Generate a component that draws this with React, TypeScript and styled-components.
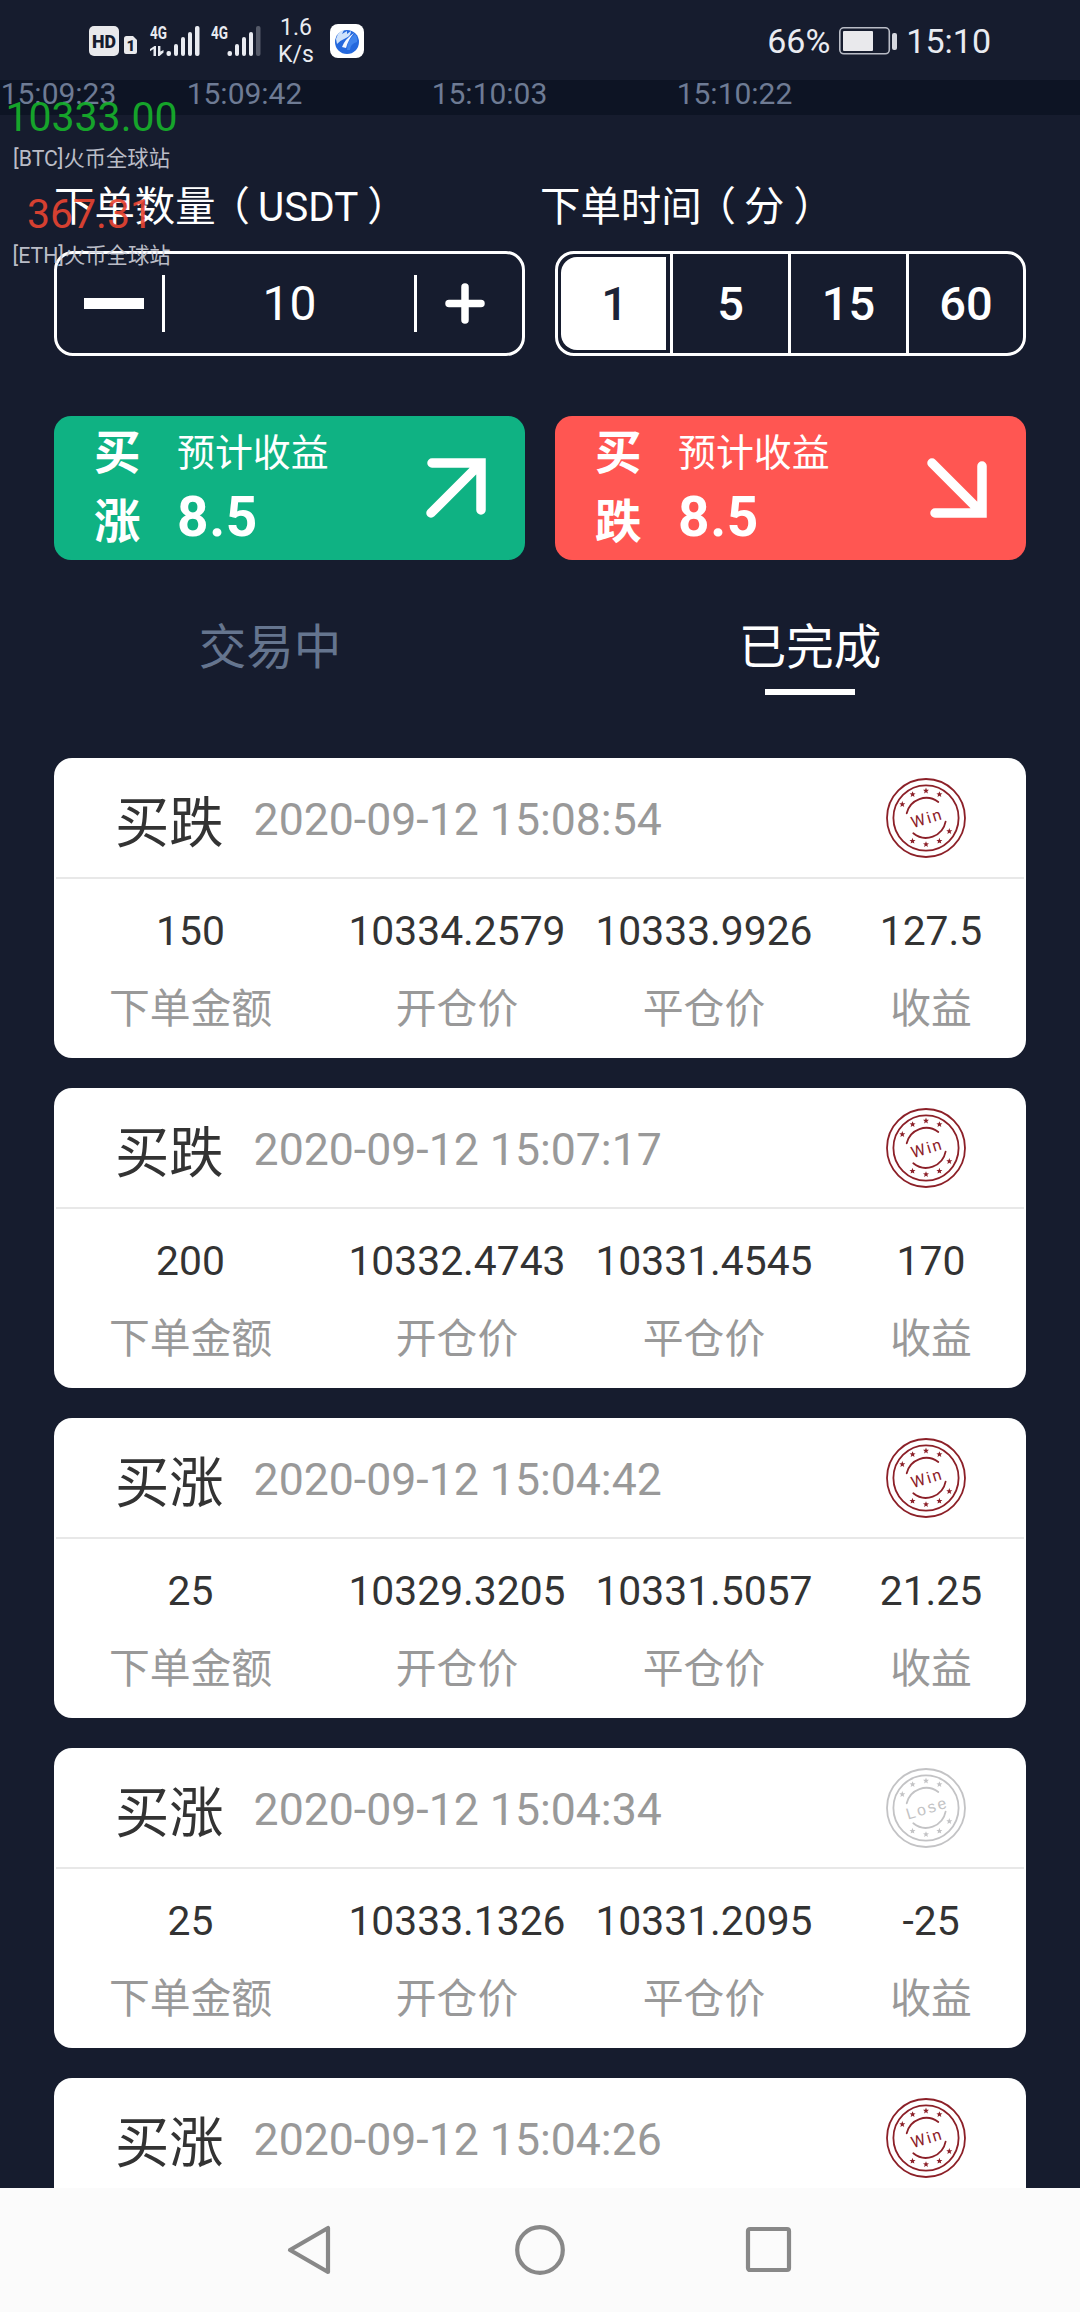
/**
 * Order Screen Component
 *
 * Short-term BTC options screen: order amount and duration pickers,
 * buy up / buy down actions and the list of finished orders.
 */
import React, { useState } from 'react';
import styled, { createGlobalStyle } from 'styled-components';

const GlobalStyle = createGlobalStyle`
  * {
    box-sizing: border-box;
  }

  body {
    margin: 0;
    background: #161c2e;
    font-family: Roboto, 'Noto Sans CJK SC', sans-serif;
  }
`;

const Screen = styled.div`
  position: relative;
  display: flex;
  flex-direction: column;
  width: 1080px;
  height: 2312px;
  overflow: hidden;
  background: #161c2e;
  color: #fff;
`;

// Status bar
const StatusBar = styled.div`
  display: flex;
  justify-content: space-between;
  align-items: center;
  flex: none;
  height: 80px;
  padding: 2px 89px 0;
  color: #e9ebf1;
`;

const StatusGroup = styled.div`
  display: flex;
  align-items: center;
`;

const StatusText = styled.span`
  font-size: 34px;
  line-height: 40px;
`;

const NetSpeed = styled.div`
  width: 36px;
  margin: 0 16px 0 17px;
  font-size: 23px;
  line-height: 27px;
  text-align: center;
`;

const AppBadge = styled.div`
  display: flex;
  align-items: center;
  justify-content: center;
  width: 34px;
  height: 34px;
  border-radius: 8px;
  background: #fff;
`;

const SignalIcon = styled.svg`
  overflow: visible;
`;

const BatteryIcon = styled.svg`
  margin: 0 9px 0 9px;
`;

// Time axis of the chart, scrolled under the status bar
const TimeAxis = styled.div`
  display: flex;
  flex: none;
  height: 35px;
  background: #0d1424;
  color: #6e7b94;
  font-size: 30px;
  line-height: 28px;
`;

const AxisLabel = styled.span<{ $width: number }>`
  width: ${props => props.$width}px;
  text-align: center;

  &:first-child {
    margin-right: 5px;
  }
`;

// Floating price window
const Ticker = styled.div`
  position: absolute;
  top: 93px;
  left: 0;
  width: 183px;
  text-align: center;
  opacity: 0.9;
`;

const TickerPrice = styled.div<{ $up?: boolean }>`
  color: ${props => (props.$up ? '#16b32b' : '#ea4532')};
  font-size: 41px;
  line-height: 48px;
  padding-right: ${props => (props.$up ? 0 : 3)}px;
`;

const TickerName = styled.div`
  margin: 4px 0 17px;
  color: #ccced8;
  font-size: 21.3px;
  line-height: 28px;
`;

// Order form
const FormGrid = styled.div`
  display: grid;
  grid-template-columns: 471px 471px;
  column-gap: 30px;
  padding: 0 54px;
`;

const FormLabels = styled.div`
  display: grid;
  grid-template-columns: 486px 1fr;
  padding: 69px 54px 19px;
  font-size: 40.4px;
  line-height: 48px;
`;

const OpenParen = styled.span`
  margin: 0 8px 0 -6px;
`;

const CloseParen = styled.span`
  margin-left: 9px;
`;

const Stepper = styled.div`
  display: flex;
  align-items: center;
  height: 105px;
  border: 3px solid #fff;
  border-radius: 19px;
`;

const StepButton = styled.button`
  display: flex;
  align-items: center;
  justify-content: center;
  width: 108px;
  height: 57px;
  padding: 0;
  border: 0;
  background: none;

  &:first-child {
    padding-left: 8px;
    border-right: 3px solid #fff;
  }

  &:last-child {
    padding-right: 10px;
    border-left: 3px solid #fff;
  }
`;

const Amount = styled.div`
  flex: 1;
  font-size: 48px;
  line-height: 60px;
  text-align: center;
`;

const Durations = styled.div`
  display: grid;
  grid-template-columns: 112px 118px 118px 1fr;
  height: 105px;
  border: 3px solid #fff;
  border-radius: 19px;
`;

const Duration = styled.button<{ $active: boolean }>`
  padding: ${props => (props.$active ? '0 0 0 2px' : '0')};
  margin: ${props => (props.$active ? '3px 4px 3px 3px' : '0')};
  border: 0;
  border-left: ${props => (props.$active ? 0 : '3px solid #fff')};
  border-radius: ${props => (props.$active ? '16px 0 0 16px' : '0')};
  background: ${props => (props.$active ? '#fff' : 'none')};
  color: ${props => (props.$active ? '#1c2438' : '#fff')};
  font-family: inherit;
  font-size: 47px;
  font-weight: 500;
`;

const ActionButton = styled.button<{ $color: string }>`
  display: flex;
  height: 144px;
  margin-top: 60px;
  padding: 0 37px 0 40px;
  border: 0;
  border-radius: 17px;
  background: ${props => props.$color};
  color: #fff;
  font-family: inherit;
  text-align: left;
`;

const ActionName = styled.div`
  width: 47px;
  padding-top: 3px;
  font-size: 46.5px;
  font-weight: 700;
  line-height: 69px;
`;

const ActionProfit = styled.div`
  flex: 1;
  padding: 13px 0 0 36px;
  font-size: 37.9px;
  line-height: 48px;

  strong {
    display: block;
    margin-top: 10px;
    font-size: 55px;
    letter-spacing: 0.6px;
    line-height: 60px;
  }
`;

const ArrowIcon = styled.svg`
  margin-top: 40px;
`;

// Tabs
const Tabs = styled.div`
  display: flex;
  margin-bottom: 63px;
  padding-top: 58px;
`;

const Tab = styled.div<{ $active: boolean }>`
  display: flex;
  flex: 1;
  flex-direction: column;
  align-items: center;
  color: ${props => (props.$active ? '#fff' : '#65758f')};
  font-size: 47.5px;
  line-height: 60px;

  &::after {
    content: '';
    width: 90px;
    height: 6px;
    margin-top: 11px;
    background: ${props => (props.$active ? '#fff' : 'transparent')};
  }
`;

// Order list
const OrderList = styled.div`
  display: flex;
  flex: 1;
  flex-direction: column;
  gap: 30px;
  min-height: 0;
  padding: 0 54px;
  overflow: hidden;
`;

const Card = styled.div`
  flex: none;
  height: 300px;
  border-radius: 18px;
  background: #fff;
  color: #333;
  overflow: hidden;
`;

const CardHeader = styled.div`
  display: flex;
  align-items: center;
  height: 121px;
  margin: 0 2px;
  padding: 1px 58px 0 59px;
  border-bottom: 2px solid #e8e8e8;
`;

const Direction = styled.div`
  padding-top: 11px;
  font-size: 54.3px;
  line-height: 64px;
`;

const OrderTime = styled.div`
  flex: 1;
  padding: 4px 0 0 30px;
  color: #999;
  font-size: 44.6px;
  line-height: 54px;
`;

const CardBody = styled.div`
  display: grid;
  grid-template-columns: 273px 260px 234px 220px;
  padding-top: 28px;
  font-size: 40.8px;
  line-height: 48px;
  text-align: center;
`;

const FieldLabel = styled.div`
  margin-top: 30px;
  color: #999;
`;

// Android navigation bar
const NavBar = styled.div`
  display: flex;
  align-items: center;
  justify-content: space-between;
  flex: none;
  height: 124px;
  padding: 0 286px;
  background: #fbfbfb;
`;

interface Order {
  direction: string;
  time: string;
  amount: string;
  open: string;
  close: string;
  profit: string;
  win: boolean;
}

const ORDERS: Order[] = [
  { direction: '买跌', time: '2020-09-12 15:08:54', amount: '150', open: '10334.2579', close: '10333.9926', profit: '127.5', win: true },
  { direction: '买跌', time: '2020-09-12 15:07:17', amount: '200', open: '10332.4743', close: '10331.4545', profit: '170', win: true },
  { direction: '买涨', time: '2020-09-12 15:04:42', amount: '25', open: '10329.3205', close: '10331.5057', profit: '21.25', win: true },
  { direction: '买涨', time: '2020-09-12 15:04:34', amount: '25', open: '10333.1326', close: '10331.2095', profit: '-25', win: false },
  { direction: '买涨', time: '2020-09-12 15:04:26', amount: '', open: '', close: '', profit: '', win: true },
];

const STARS = [
  [16.3, 26.3],
  [26.6, 16.4],
  [40, 12.8],
  [53.4, 16.4],
  [63.3, 53.3],
  [53.4, 63],
  [40, 66.4],
  [26.5, 63],
];

const Seal: React.FC<{ win: boolean }> = ({ win }) => {
  const color = win ? '#8c2028' : '#c3c3c5';
  return (
    <svg width="80" height="80" viewBox="0 0 80 80" fill="none" stroke={color} strokeWidth="1.8">
      <circle cx="40" cy="40" r="39" />
      <circle cx="40" cy="40" r="32.6" />
      <path d="M20.7 35.3A20 20 0 0 1 52.3 24M27.3 55.3A20 20 0 0 0 59.6 43.7" strokeLinecap="round" />
      {STARS.map(([x, y]) => (
        <path
          key={`${x}-${y}`}
          transform={`translate(${x} ${y})`}
          d="M0-3.2L.8-1.1 3-1 1.3.4 1.9 2.6 0 1.4-1.9 2.6-1.3.4-3-1-.8-1.1z"
          fill={color}
          stroke="none"
        />
      ))}
      <text
        x="41"
        y="46"
        transform="rotate(-17 40 40)"
        textAnchor="middle"
        fill={color}
        stroke="none"
        fontFamily={win ? 'Roboto, sans-serif' : "'Liberation Sans', sans-serif"}
        fontSize="16"
        letterSpacing={win ? 2 : 2.2}
      >
        {win ? 'Win' : 'Lose'}
      </text>
    </svg>
  );
};

const Signal: React.FC<{ full?: boolean }> = ({ full }) => (
  <SignalIcon width="50" height="32" viewBox="0 0 50 32" fill="#e9ebf1">
    <text x="0" y="14" fontFamily="Roboto" fontSize="18" fontWeight="700" textLength="17" lengthAdjust="spacingAndGlyphs">
      4G
    </text>
    {full && <path d="M3.5 31V24L0 26.2V24L4.5 21H6v10zM8 21h2.4v5.4L13.5 25v2.5L9.5 31H8z" />}
    <rect x="16.5" y="26" width="4.5" height="5" rx="2" />
    <rect x="24" y="19" width="4" height="12" rx="2" />
    <rect x="31" y="12" width="4" height="19" rx="2" />
    <rect x="38" y="7" width="4" height="24" rx="2" />
    <rect x="45" y="1" width="4.5" height="30" rx="2" opacity={full ? 1 : 0.3} />
  </SignalIcon>
);

const OrderCard: React.FC<{ order: Order }> = ({ order }) => (
  <Card>
    <CardHeader>
      <Direction>{order.direction}</Direction>
      <OrderTime>{order.time}</OrderTime>
      <Seal win={order.win} />
    </CardHeader>
    {order.amount && (
      <CardBody>
        <div>
          {order.amount}
          <FieldLabel>下单金额</FieldLabel>
        </div>
        <div>
          {order.open}
          <FieldLabel>开仓价</FieldLabel>
        </div>
        <div>
          {order.close}
          <FieldLabel>平仓价</FieldLabel>
        </div>
        <div>
          {order.profit}
          <FieldLabel>收益</FieldLabel>
        </div>
      </CardBody>
    )}
  </Card>
);

const App: React.FC = () => {
  const [amount, setAmount] = useState(10);
  const [duration, setDuration] = useState(1);
  const [tab, setTab] = useState('已完成');

  return (
    <Screen>
      <GlobalStyle />

      <StatusBar>
        <StatusGroup>
          <svg width="61" height="32" viewBox="0 0 61 32">
            <rect x="0" y="1" width="30" height="30" rx="5" fill="#e9e9ec" />
            <text x="3" y="22.500" fontFamily="Roboto" fontSize="18" fontWeight="900" textLength="24" lengthAdjust="spacingAndGlyphs" fill="#161c2e">
              HD
            </text>
            <path d="M37.500 11H44L48 15V27A2 2 0 0 1 46 29H37A2 2 0 0 1 35 27V13.500A2.500 2.500 0 0 1 37.500 11z" fill="#e9e9ec" />
            <text x="37.500" y="26" fontFamily="Roboto" fontSize="15" fontWeight="900" fill="#161c2e">
              1
            </text>
          </svg>
          <Signal full />
          <svg width="11" height="32" />
          <Signal />
          <NetSpeed>1.6 K/s</NetSpeed>
          <AppBadge>
            <svg width="26" height="28" viewBox="0 0 26 28">
              <circle cx="13" cy="15" r="12" fill="#2468dd" />
              <path d="M2 12Q4 4 10 3L8 7 13 4 13 7 17 4Q17 9 12 11T3 17z" fill="#cfe2fb" />
              <path d="M13 23Q13 13 21 7Q24 10 23 15Q16 17 16 23z" fill="#3f83ec" />
              <path d="M8 20Q11 12 20 6Q14 13 12 21z" fill="#f4f8ff" />
            </svg>
          </AppBadge>
        </StatusGroup>
        <StatusGroup>
          <StatusText>66%</StatusText>
          <BatteryIcon width="58" height="28" viewBox="0 0 58 28">
            <rect x="0.800" y="0.800" width="49.500" height="26" rx="4" fill="none" stroke="#b9bcc6" strokeWidth="1.600" />
            <rect x="4" y="4" width="30" height="20" rx="1" fill="#e9e9ec" />
            <rect x="53" y="6" width="5" height="17" rx="2" fill="#d5d7de" />
          </BatteryIcon>
          <StatusText>15:10</StatusText>
        </StatusGroup>
      </StatusBar>

      <TimeAxis>
        <AxisLabel $width={117}>15:09:23</AxisLabel>
        <AxisLabel $width={245}>15:09:42</AxisLabel>
        <AxisLabel $width={245}>15:10:03</AxisLabel>
        <AxisLabel $width={245}>15:10:22</AxisLabel>
      </TimeAxis>

      <FormLabels>
        <span>
          下单数量<OpenParen>（</OpenParen>USDT<CloseParen>）</CloseParen>
        </span>
        <span>
          下单时间<OpenParen>（</OpenParen>分<CloseParen>）</CloseParen>
        </span>
      </FormLabels>

      <FormGrid>
        <Stepper>
          <StepButton onClick={() => setAmount(Math.max(10, amount - 10))}>
            <svg width="60" height="11">
              <rect width="60" height="11" fill="#fff" />
            </svg>
          </StepButton>
          <Amount>{amount}</Amount>
          <StepButton onClick={() => setAmount(amount + 10)}>
            <svg width="40" height="42" viewBox="0 0 40 42" stroke="#fff" strokeWidth="7.500" strokeLinecap="round">
              <path d="M4 20.500H36M20 4V37" />
            </svg>
          </StepButton>
        </Stepper>
        <Durations>
          {[1, 5, 15, 60].map(value => (
            <Duration key={value} $active={value === duration} onClick={() => setDuration(value)}>
              {value}
            </Duration>
          ))}
        </Durations>

        <ActionButton $color="#0fb283">
          <ActionName>买涨</ActionName>
          <ActionProfit>
            预计收益
            <strong>8.5</strong>
          </ActionProfit>
          <ArrowIcon width="64" height="64" viewBox="0 0 64 64" fill="none" stroke="#fff" strokeWidth="9.500" strokeLinecap="round">
            <path d="M8 7H57V54M57 7L7 57" />
          </ArrowIcon>
        </ActionButton>
        <ActionButton $color="#ff5652">
          <ActionName>买跌</ActionName>
          <ActionProfit>
            预计收益
            <strong>8.5</strong>
          </ActionProfit>
          <ArrowIcon width="64" height="64" viewBox="0 0 64 64" fill="none" stroke="#fff" strokeWidth="9.500" strokeLinecap="round">
            <path d="M10 57H57V10M57 57L7 7" />
          </ArrowIcon>
        </ActionButton>
      </FormGrid>

      <Tabs>
        {['交易中', '已完成'].map(name => (
          <Tab key={name} $active={name === tab} onClick={() => setTab(name)}>
            {name}
          </Tab>
        ))}
      </Tabs>

      <OrderList>
        {ORDERS.map(order => (
          <OrderCard key={order.time} order={order} />
        ))}
      </OrderList>

      <NavBar>
        <svg width="50" height="52" viewBox="0 0 50 52" fill="none" stroke="#888" strokeWidth="4.200" strokeLinejoin="round">
          <path d="M42 4V48L4 26z" />
        </svg>
        <svg width="52" height="52" viewBox="0 0 52 52" fill="none" stroke="#888" strokeWidth="4.200">
          <circle cx="26" cy="26" r="22.800" />
        </svg>
        <svg width="50" height="50" viewBox="0 0 50 50" fill="none" stroke="#888" strokeWidth="4.200">
          <rect x="4" y="4" width="41" height="41" rx="2" />
        </svg>
      </NavBar>

      <Ticker>
        <TickerPrice $up>10333.00</TickerPrice>
        <TickerName>[BTC]火币全球站</TickerName>
        <TickerPrice>367.31</TickerPrice>
        <TickerName>[ETH]火币全球站</TickerName>
      </Ticker>
    </Screen>
  );
};

export default App;
